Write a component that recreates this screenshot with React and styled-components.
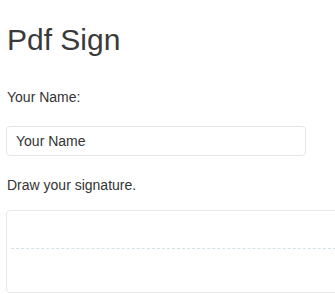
import styled, { createGlobalStyle } from "styled-components";

const GlobalStyle = createGlobalStyle`
  body {
    margin: 0;
    background: #fff;
    font-family: "Liberation Sans", Arial, sans-serif;
    font-size: 14px;
    color: #333;
  }
`;

const Page = styled.div`
  padding: 0 6px;
`;

const Title = styled.h1`
  margin: 23px 0 0 1px;
  font-size: 30px;
  font-weight: 400;
  line-height: 33px;
  color: #3a3a3a;
`;

const Label = styled.label`
  display: block;
  margin: ${(p) => p.$top}px 0 0 1px;
  line-height: 20px;
`;

const NameInput = styled.input`
  display: block;
  box-sizing: border-box;
  width: 300px;
  height: 30px;
  margin-top: 19px;
  padding: 0 9px;
  border: 1px solid #e6e6e6;
  border-radius: 4px;
  font-family: inherit;
  font-size: 14px;
  color: #333;
  &::placeholder {
    color: #333;
  }
`;

const Pad = styled.div`
  box-sizing: border-box;
  width: 340px;
  height: 83px;
  margin-top: 15px;
  padding-top: 37px;
  border: 1px solid #e8e8e8;
  border-radius: 4px;
`;

const Guide = styled.div`
  margin: 0 4px;
  border-top: 1px dashed #d3e2e6;
`;

export default function App() {
  return (
    <>
      <GlobalStyle />
      <Page>
        <Title>Pdf Sign</Title>
        <Label $top={31}>Your Name:</Label>
        <NameInput placeholder="Your Name" />
        <Label $top={19}>Draw your signature.</Label>
        <Pad>
          <Guide />
        </Pad>
      </Page>
    </>
  );
}
